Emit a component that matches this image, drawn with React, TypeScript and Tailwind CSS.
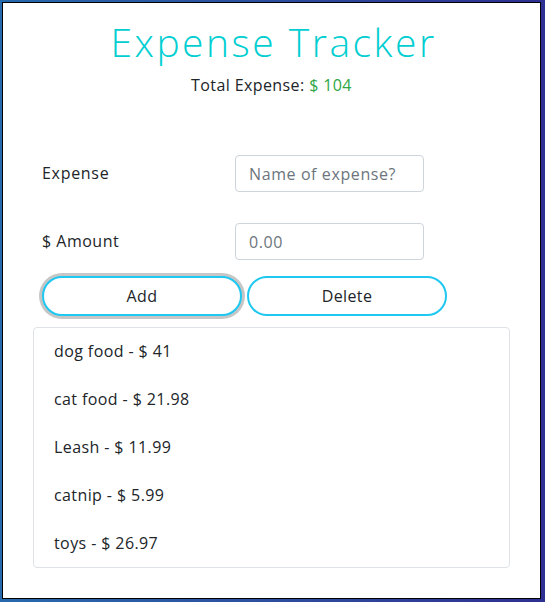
export default function App() {
  const items: [string, string][] = [
    ["dog food", "41"],
    ["cat food", "21.98"],
    ["Leash", "11.99"],
    ["catnip", "5.99"],
    ["toys", "26.97"],
  ];
  return (
    <div className="w-[545px] h-[602px] bg-gradient-to-r from-[#2769ab] to-[#2e2f92] pt-[2px] pl-[2px] pr-[4px] pb-[3px] font-['Open_Sans',sans-serif] text-[#212529] tracking-[0.4px]">
      <div className="h-full border border-black bg-white flex flex-col">
        <h1 className="mt-[16px] h-[46px] pl-[4px] text-center text-[39px] leading-[46px] font-light tracking-[2.5px] text-[#00ced1]">
          Expense Tracker
        </h1>
        <p className="mt-[8px] h-[24px] text-center text-[16px] leading-[24px]">
          Total Expense: <span className="text-[#2ea645]">$ 104</span>
        </p>
        <div className="mt-[58px] ml-[39px] flex items-center h-[37px]">
          <label className="w-[193px] pb-[2px] text-[16px] tracking-[0.7px]">Expense</label>
          <input
            className="w-[189px] h-[37px] border border-[#ced4da] rounded-[4px] px-[13px] text-[16px] tracking-[0.6px] outline-none placeholder:text-[#6c757d]"
            placeholder="Name of expense?"
          />
        </div>
        <div className="mt-[31px] ml-[39px] flex items-center h-[37px]">
          <label className="w-[193px] pb-[2px] text-[16px] tracking-[0.5px]">$ Amount</label>
          <input
            className="w-[189px] h-[37px] border border-[#ced4da] rounded-[4px] px-[13px] text-[16px] tracking-[0.6px] outline-none placeholder:text-[#6c757d]"
            placeholder="0.00"
          />
        </div>
        <div className="mt-[16px] ml-[39px] flex gap-[5px]">
          <button className="w-[200px] h-[40px] rounded-full border-2 border-[#1fc8f1] bg-white text-[16px] text-[#212529] shadow-[0_0_0_3px_#c6c6c6]">
            Add
          </button>
          <button className="w-[200px] h-[40px] rounded-full border-2 border-[#1fc8f1] bg-white text-[16px] text-[#212529]">
            Delete
          </button>
        </div>
        <ul className="mt-[11px] ml-[30px] w-[477px] h-[241px] border border-[#dee2e6] rounded-[4px]">
          {items.map(([n, v]) => (
            <li key={n} className="h-[48px] flex items-center pl-[20px] pb-[2px] text-[16px]">
              {n} - $ {v}
            </li>
          ))}
        </ul>
      </div>
    </div>
  );
}
